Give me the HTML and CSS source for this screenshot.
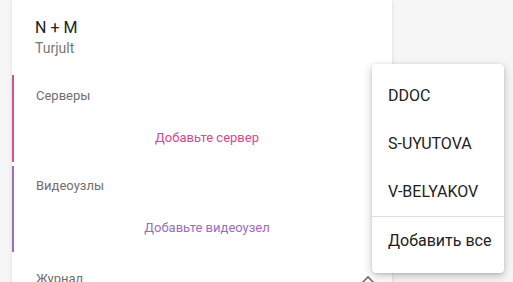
FILE: index.html
```html
<!DOCTYPE html>
<html lang="ru">
  <head>
    <meta charset="UTF-8" />
    <meta name="viewport" content="width=device-width, initial-scale=1.0" />
    <title>N + M</title>
    <link rel="stylesheet" href="styles.css">
  </head>
  <body>
    <div class="panel">
      <div class="head">
        <div class="title">N + M</div>
        <div class="subtitle">Turjult</div>
      </div>

      <!-- Servers -->
      <div class="section servers">
        <div class="label">Серверы</div>
        <div class="add">Добавьте сервер</div>
      </div>

      <!-- Video nodes -->
      <div class="section nodes">
        <div class="label">Видеоузлы</div>
        <div class="add">Добавьте видеоузел</div>
      </div>

      <!-- Log -->
      <div class="section log">
        <div class="label">Журнал</div>
        <svg class="chevron" width="16" height="10" viewBox="0 0 16 10">
          <path d="M1.5 8.5 L8 2 L14.5 8.5" fill="none" stroke="#6f6f6f" stroke-width="1.6" />
        </svg>
      </div>
    </div>

    <div class="menu">
      <div class="item">DDOC</div>
      <div class="item">S-UYUTOVA</div>
      <div class="item">V-BELYAKOV</div>
      <div class="divider"></div>
      <div class="item">Добавить все</div>
    </div>
  </body>
</html>
```

FILE: styles.css
```css
body {
  font-family: Roboto, "Liberation Sans", Arial, sans-serif;
  background-color: #f6f6f6;
  color: #212121;
  margin: 0;
  padding: 0;
  height: 282px;
  overflow: hidden;
}

.panel {
  width: 380px;
  margin-left: 12px;
  min-height: 282px;
  background: #fff;
  box-shadow: 0 1px 4px rgba(0, 0, 0, 0.12);
}

.head {
  padding: 18px 0 17px 23px;
}

.title {
  font-size: 16px;
  line-height: 20px;
  color: #222;
}

.subtitle {
  font-size: 14px;
  line-height: 20px;
  color: #777;
}

.section {
  position: relative;
  border-left: 2px solid transparent;
  padding: 13px 14px 16px 22px;
  margin-bottom: 4px;
}

.servers {
  border-left-color: #da508a;
}

.nodes {
  padding-top: 12px;
  border-left-color: #9a6cc4;
}

.log {
  padding-top: 15px;
}

.label {
  font-size: 13px;
  line-height: 16px;
  color: #6f6f6f;
}

.add {
  margin-top: 26px;
  font-size: 13px;
  line-height: 16px;
  text-align: center;
}

.servers .add {
  color: #e0468a;
}

.nodes .add {
  color: #9a6cc4;
}

.chevron {
  position: absolute;
  right: 16px;
  top: 19px;
}

/* Popup menu */
.menu {
  position: absolute;
  left: 372px;
  top: 64px;
  width: 132px;
  padding: 8px 0;
  background: #fff;
  border-radius: 4px;
  box-shadow: 0 3px 10px rgba(0, 0, 0, 0.22), 0 1px 3px rgba(0, 0, 0, 0.12);
}

.item {
  height: 48px;
  line-height: 48px;
  padding: 0 16px;
  font-size: 16px;
  color: #222;
  white-space: nowrap;
}

.divider {
  height: 1px;
  background: #e0e0e0;
}
```
